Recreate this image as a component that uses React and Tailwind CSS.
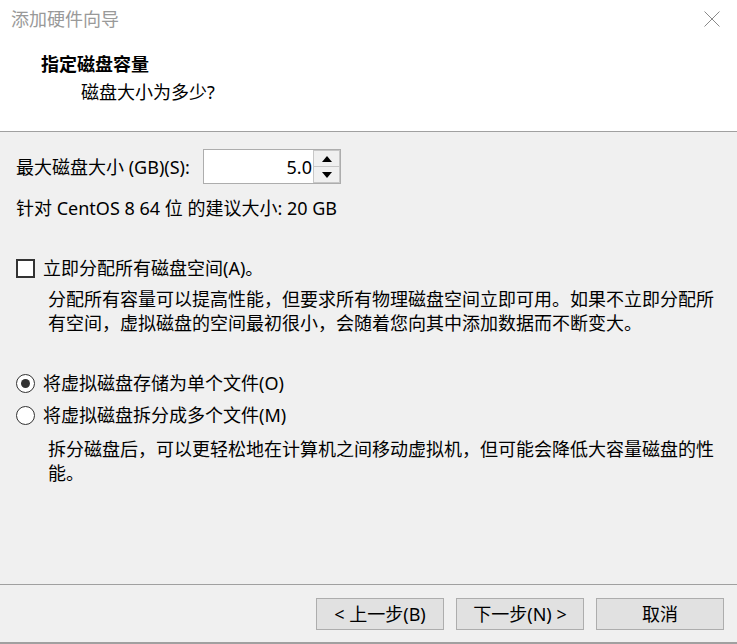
import React, { useState } from 'react';

const font = { fontFamily: '"Noto Sans", "Noto Sans CJK SC", sans-serif' };

function CloseIcon() {
  return (
    <svg width="16" height="16" viewBox="0 0 16 16" className="block">
      <path d="M0.5 0.5 L15.5 15.5 M15.5 0.5 L0.5 15.5" stroke="#8a8a8a" strokeWidth="1" fill="none" />
    </svg>
  );
}

function Spinner({ value }) {
  return (
    <div className="flex h-[35px] w-[138px] border border-[#adadad] bg-white">
      <div className="flex flex-1 items-center justify-end pr-[1px] text-[18px] text-black">{value}</div>
      <div className="flex w-[27px] flex-col">
        <button className="flex flex-1 items-center justify-center border border-[#c7c7c7] bg-[#f0f0f0]">
          <svg width="10" height="6" viewBox="0 0 10 6"><path d="M0 6 L5 0 L10 6 Z" fill="#000" /></svg>
        </button>
        <button className="flex flex-1 items-center justify-center border border-t-0 border-[#c7c7c7] bg-[#f0f0f0]">
          <svg width="10" height="6" viewBox="0 0 10 6"><path d="M0 0 L5 6 L10 0 Z" fill="#000" /></svg>
        </button>
      </div>
    </div>
  );
}

function Radio({ checked, label, onClick }) {
  return (
    <div className="flex h-[24px] items-center cursor-default" onClick={onClick}>
      <div className="flex h-[19px] w-[19px] items-center justify-center rounded-full border-[1.5px] border-[#333] bg-white">
        {checked && <div className="h-[9px] w-[9px] rounded-full bg-[#333]" />}
      </div>
      <span className="ml-[8px]">{label}</span>
    </div>
  );
}

function WizardButton({ text }) {
  return (
    <button className="flex h-[32px] w-[128px] items-center justify-center border border-[#adadad] bg-[#e1e1e1] text-[18px] text-black">
      {text}
    </button>
  );
}

export default function App() {
  const [allocate, setAllocate] = useState(false);
  const [mode, setMode] = useState('single');

  return (
    <div style={font} className="flex h-[644px] w-[737px] flex-col bg-[#f0f0f0] text-[18px] leading-[24px] text-black">
      {/* header */}
      <div className="h-[132px] border-b border-[#a0a0a0] bg-white">
        <div className="flex h-[38px] items-center justify-between pl-[11px] pr-[17px]">
          <span className="text-[#999999]">添加硬件向导</span>
          <CloseIcon />
        </div>
        <div className="mt-[14px] pl-[41px] font-bold">指定磁盘容量</div>
        <div className="mt-[4px] pl-[81px]">磁盘大小为多少?</div>
      </div>

      {/* body */}
      <div className="flex-1 px-[16px] pt-[17px]">
        <div className="flex h-[35px] items-center">
          <span className="w-[187px]">最大磁盘大小 (GB)(S):</span>
          <Spinner value="5.0" />
        </div>
        <div className="mt-[12px]">针对 CentOS 8 64 位 的建议大小: 20 GB</div>

        <div className="mt-[36px] flex h-[24px] items-center cursor-default" onClick={() => setAllocate(!allocate)}>
          <div className="flex h-[19px] w-[19px] items-center justify-center border-2 border-[#333] bg-white">
            {allocate && <span className="text-[14px] leading-none">✓</span>}
          </div>
          <span className="ml-[8px]">立即分配所有磁盘空间(A)。</span>
        </div>
        <p className="mt-[7px] w-[704px] pl-[32px]">
          分配所有容量可以提高性能，但要求所有物理磁盘空间立即可用。如果不立即分配所有空间，虚拟磁盘的空间最初很小，会随着您向其中添加数据而不断变大。
        </p>

        <div className="mt-[36px]">
          <Radio checked={mode === 'single'} label="将虚拟磁盘存储为单个文件(O)" onClick={() => setMode('single')} />
        </div>
        <div className="mt-[8px]">
          <Radio checked={mode === 'multi'} label="将虚拟磁盘拆分成多个文件(M)" onClick={() => setMode('multi')} />
        </div>
        <p className="mt-[10px] w-[704px] pl-[32px]">
          拆分磁盘后，可以更轻松地在计算机之间移动虚拟机，但可能会降低大容量磁盘的性能。
        </p>
      </div>

      {/* footer */}
      <div className="flex h-[60px] justify-end gap-[12px] border-t border-b-2 border-[#a0a0a0] pr-[13px] pt-[13px]">
        <WizardButton text="< 上一步(B)" />
        <WizardButton text="下一步(N) >" />
        <WizardButton text="取消" />
      </div>
    </div>
  );
}
